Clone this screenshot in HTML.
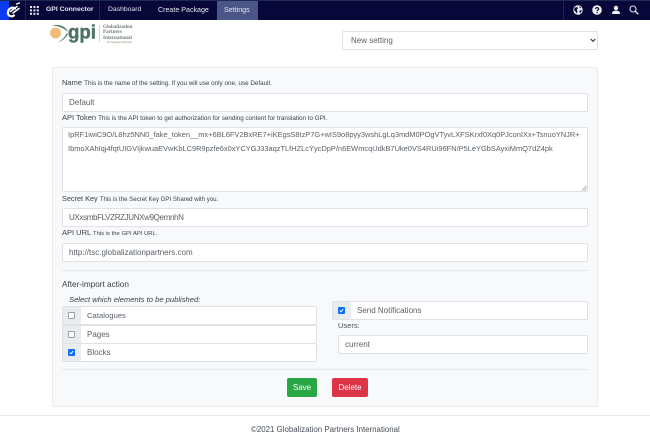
<!DOCTYPE html>
<html lang="en"><head><meta charset="utf-8"><title>Settings</title>
<style>
html,body{margin:0;padding:0;background:#fff}
body{width:650px;height:443px;position:relative;overflow:hidden;font-family:"Liberation Sans",sans-serif;color:#495057}
.a{position:absolute;white-space:nowrap}
.nav{left:0;top:0;width:650px;height:20px;background:#07073a;border-top:1px solid #1c2a55;box-sizing:border-box}
.navt{font-size:7.1px;color:#e4e6ee;top:5px;line-height:10px}
.sep{top:0;width:1px;height:20px;background:#23234f}
.box{background:#fff;border:1px solid #dee2e6;border-radius:2px;box-sizing:border-box}
.inp{font-size:8px;line-height:17px;color:#5b6268;padding-left:6px;left:62px;width:526px;height:19px}
.lbl{font-size:7.5px;line-height:10px;color:#3c4146}
.lbl small{font-size:6.3px;color:#3c4146}
.tx{font-size:7.45px;color:#5b6268;left:68px;line-height:12px}
.hr{height:1px;background:#e6e8ea;left:62px;width:526px}
.ig{left:62px;width:255px;height:19px;border:1px solid #dee2e6;border-radius:2px;box-sizing:border-box;background:#fff;font-size:8px;line-height:17px;color:#5b6268}
.ig i{position:absolute;left:0;top:0;width:18px;height:17px;background:#e9ecef}
.ig span{position:absolute;left:24px;top:0}
.cb{position:absolute;left:5px;top:5px;width:7px;height:7px;box-sizing:border-box;border:1px solid #9aa0a6;border-radius:1px;background:#fff}
.cb.on{background:#0d6efd;border-color:#0d6efd}
.btn{top:378px;height:19px;border-radius:2px;color:#fff;font-size:8px;line-height:19px;text-align:center}
</style></head><body>
<div class="a nav"></div>
<div class="a" style="left:0;top:1px;width:9px;height:19px;background:#0a3cf0"></div>
<svg class="a" style="left:3px;top:1px" width="20" height="19" viewBox="0 0 20 19" fill="none" stroke="#fff" stroke-linecap="round"><path d="M12 7.5 C9 5.5 5.5 7.5 5 11 C4.6 14.5 8 16.5 11 14.5" stroke-width="2.2"/><path d="M7.5 10.5 L14 5.5 M10 12 L16 7.5" stroke-width="1.6"/><path d="M13.5 3 L16.5 2" stroke-width="1.2"/></svg>
<div class="a sep" style="left:25px"></div>
<svg class="a" style="left:30px;top:6px" width="9" height="9" fill="#e8e8f0"><rect x="0" y="0" width="2" height="2"/><rect x="3.4" y="0" width="2" height="2"/><rect x="6.8" y="0" width="2" height="2"/><rect x="0" y="3.4" width="2" height="2"/><rect x="3.4" y="3.4" width="2" height="2"/><rect x="6.8" y="3.4" width="2" height="2"/><rect x="0" y="6.8" width="2" height="2"/><rect x="3.4" y="6.8" width="2" height="2"/><rect x="6.8" y="6.8" width="2" height="2"/></svg>
<div class="a navt" style="left:46px;font-weight:bold;font-size:6.8px">GPI Connector</div>
<div class="a sep" style="left:99px"></div>
<div class="a navt" style="left:108px;font-size:6.8px">Dashboard</div>
<div class="a navt" style="left:158px;">Create Package</div>
<div class="a" style="left:217px;top:1px;width:41px;height:19px;background:#4a5588"></div>
<div class="a navt" style="left:224px;">Settings</div>
<div class="a sep" style="left:563px"></div>
<svg class="a" style="left:573px;top:5px" width="10" height="10" viewBox="0 0 10 10"><circle cx="5" cy="5" r="4.7" fill="#f4f4f8"/><path d="M1.8 2.5 L4.4 2 L4.9 3.6 L3.7 4.7 L4.6 6.2 L3.8 8.6 L2.6 6.6 L1 5 Z M6.2 1 L8.2 2.6 L7 3.6 Z M6.6 5.4 L8.9 5.2 L7.8 7.8 L6.4 7.2 Z" fill="#07073a"/></svg>
<svg class="a" style="left:592px;top:5px" width="10" height="10" viewBox="0 0 10 10"><circle cx="5" cy="5" r="4.8" fill="#f4f4f8"/><path d="M3.4 3.9 C3.4 2.3 6.7 2.2 6.7 3.9 C6.7 5 5 5 5 6.2" fill="none" stroke="#07073a" stroke-width="1.2"/><rect x="4.4" y="7" width="1.2" height="1.2" fill="#07073a"/></svg>
<svg class="a" style="left:611px;top:5px" width="10" height="10" viewBox="0 0 10 10" fill="#f4f4f8"><circle cx="5" cy="3" r="2.2"/><path d="M1 9 C1 6 3 5.6 5 5.6 C7 5.6 9 6 9 9 Z"/></svg>
<svg class="a" style="left:629px;top:5px" width="10" height="10" viewBox="0 0 10 10" fill="none" stroke="#dfe0ea" stroke-width="1.1"><circle cx="4" cy="4" r="3"/><path d="M6.2 6.2 L9.3 9.3" stroke-width="1.4"/></svg>

<svg class="a" style="left:49px;top:23px" width="50" height="22" viewBox="0 0 50 22"><ellipse cx="6.5" cy="10" rx="5.5" ry="5.5" fill="#f2bd7c"/><path d="M3 2.2 C10 1 17 3 19 9 C15 5 10 3 3 2.2 Z M19 11 C17 15 13 18 9 19.5 C13 17 16 14 18 10 Z" fill="#4f7770"/><text x="19" y="15.5" font-family="Liberation Sans,sans-serif" font-weight="bold" font-size="19" fill="#4d7067" stroke="#4d7067" stroke-width=".4" textLength="28" lengthAdjust="spacingAndGlyphs">gpi</text></svg>
<div class="a" style="left:99px;top:25px;width:1px;height:17px;background:#cfd8d8"></div>
<div class="a" style="left:103px;top:24.5px;font:bold 5.1px/5.6px 'Liberation Serif',serif;color:#6f807c;white-space:normal;width:36px">Globalization<br>Partners<br>International</div>
<div class="a" style="left:107px;top:41px;font:2.4px/3px 'Liberation Sans',sans-serif;color:#8a8a70">the language that leads</div>

<div class="a box" style="left:342px;top:31px;width:256px;height:19px;font-size:8px;line-height:17px;padding-left:8px;color:#5b6268">New setting</div>
<svg class="a" style="left:590px;top:38px" width="6" height="5" fill="none" stroke="#343a40" stroke-width="1.2"><path d="M.7 1 L3 3.3 L5.3 1"/></svg>

<div class="a" style="left:52px;top:67px;width:546px;height:340px;background:#f8f9fa;border:1px solid #e9ebed;border-radius:2px;box-sizing:border-box"></div>

<div class="a lbl" style="left:62px;top:78px">Name <small>This is the name of the setting. If you will use only one, use Default.</small></div>
<div class="a box inp" style="top:93px">Default</div>
<div class="a lbl" style="left:62px;top:113px">API Token <small>This is the API token to get authorization for sending content for translation to GPI.</small></div>
<div class="a box" style="left:62px;top:127px;width:526px;height:65px"></div>
<div class="a tx" style="top:129px">IpRF1iwiC9O/L8hz5NN0_fake_token__mx+6BL6FV2BxRE7+iKEgsS8tzP7G+wIS9o8pyy3wshLgLq3mdM0POgVTyvLXFSKrxf0Xq0PJconIXx+TsnuoYNJR+</div>
<div class="a tx" style="top:143px">IbmoXAhIqj4fqtUIGVIjkwuaEVwKbLC9R9pzfe6x0xYCYGJ33aqzTLfHZLcYycDpP/n6EWmcqUdkB7Uke0VS4RUi96FN/P5LeYGbSAyxiMmQ7dZ4pk</div>
<svg class="a" style="left:581px;top:185px" width="6" height="6" stroke="#888" stroke-width=".7"><path d="M1 5.5 L5.5 1 M3.5 5.5 L5.5 3.5"/></svg>
<div class="a lbl" style="left:62px;top:194px;font-size:7.3px">Secret Key <small style="font-size:6.1px">This is the Secret Key GPI Shared with you.</small></div>
<div class="a box inp" style="top:208px;letter-spacing:-.35px">UXxsmbFLVZRZJUNXw9QemnhN</div>
<div class="a lbl" style="left:62px;top:228px">API URL <small style="font-size:5.9px">This is the GPI API URL.</small></div>
<div class="a box inp" style="top:243px">http://tsc.globalizationpartners.com</div>
<div class="a hr" style="top:270px"></div>
<div class="a lbl" style="left:62px;top:280px;font-size:8.2px">After-import action</div>
<div class="a" style="left:69px;top:295px;font-size:7.6px;line-height:10px;font-style:italic;color:#3c4146">Select which elements to be published:</div>

<div class="a ig" style="top:306px"><i></i><b class="cb"></b><span style="font-size:7.7px">Catalogues</span></div>
<div class="a ig" style="top:325px"><i></i><b class="cb"></b><span>Pages</span></div>
<div class="a ig" style="top:343px"><i></i><b class="cb on"><svg style="position:absolute;left:0;top:0" width="5" height="5" fill="none" stroke="#fff"><path d="M.8 2.6 L2 3.8 L4.2 1"/></svg></b><span>Blocks</span></div>

<div class="a ig" style="left:332px;width:256px;top:301px"><i></i><b class="cb on"><svg style="position:absolute;left:0;top:0" width="5" height="5" fill="none" stroke="#fff"><path d="M.8 2.6 L2 3.8 L4.2 1"/></svg></b><span>Send Notifications</span></div>
<div class="a lbl" style="left:338px;top:321px;color:#495057">Users:</div>
<div class="a box inp" style="left:338px;width:250px;top:335px">current</div>
<div class="a hr" style="top:369px"></div>
<div class="a btn" style="left:287px;width:30px;background:#28a745">Save</div>
<div class="a btn" style="left:332px;width:36px;background:#dc3545">Delete</div>

<div class="a" style="left:0;top:415px;width:650px;height:1px;background:#e9ebed"></div>
<div class="a" style="left:251px;top:425px;font-size:7.9px;line-height:10px;color:#495057">©2021 Globalization Partners International</div>
</body></html>
